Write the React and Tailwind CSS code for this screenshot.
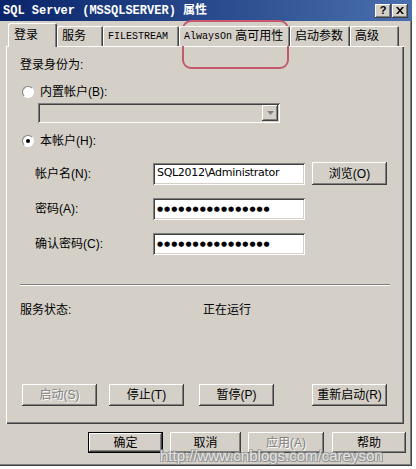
const raised =
  'shadow-[inset_-1px_-1px_#404040,inset_1px_1px_#ffffff,inset_-2px_-2px_#808080,inset_2px_2px_#d4d0c8]';
const sunken =
  'shadow-[inset_1px_1px_#808080,inset_-1px_-1px_#ffffff,inset_2px_2px_#404040,inset_-2px_-2px_#d4d0c8]';

const ui = "font-['Liberation_Sans','Noto_Sans_CJK_SC',sans-serif] text-[12px] text-black";

const Button = ({ children, className = '', disabled, isDefault }) => (
  <div
    className={`flex h-full items-center justify-center bg-[#d4d0c8] ${
      isDefault
        ? 'border border-black shadow-[inset_-1px_-1px_#404040,inset_1px_1px_#ffffff,inset_-2px_-2px_#808080]'
        : raised
    } ${disabled ? 'text-[#808080] [text-shadow:1px_1px_#ffffff]' : ''} ${className}`}
  >
    {children}
  </div>
);

const Radio = ({ checked, label }) => (
  <div className="flex h-[16px] items-center">
    <div className="ml-[16px] flex h-[12px] w-[12px] items-center justify-center rounded-full border border-t-[#808080] border-l-[#808080] border-b-white border-r-white bg-white">
      {checked && <div className="h-[4px] w-[4px] rounded-full bg-black" />}
    </div>
    <span className="ml-[6px]">{label}</span>
  </div>
);

const Field = ({ children }) => (
  <div className={`flex h-[22px] w-[152px] items-center bg-white px-[4px] ${sunken}`}>{children}</div>
);

const Dots = () => (
  <span className="font-['DejaVu_Sans',sans-serif] text-[7px] tracking-[1px]">
    {'●●●●●●●●●●●●●●●●'}
  </span>
);

const tabs = [
  { label: '服务', w: 'w-[46px]' },
  { label: 'FILESTREAM', w: 'w-[76px]', mono: true },
  { label: 'AlwaysOn', extra: ' 高可用性', w: 'w-[111px]', mono: true },
  { label: '启动参数', w: 'w-[60px]' },
  { label: '高级', w: 'w-[49px]' },
];

export default function App() {
  return (
    <div className={`relative h-[469px] w-[416px] overflow-hidden bg-white ${ui}`}>
      <div className="flex h-[466px] w-[412px] flex-col bg-[#d4d0c8] shadow-[inset_-1px_-1px_#404040,inset_-2px_-2px_#808080]">
        {/* title bar */}
        <div className="flex h-[21px] items-center justify-between bg-gradient-to-r from-[#0a246a] to-[#4a6fae] pl-[3px] pr-[4px]">
          <span className="font-['Liberation_Mono','Noto_Sans_CJK_SC',monospace] text-[12px] font-bold text-white">
            SQL Server (MSSQLSERVER) 属性
          </span>
          <div className="flex gap-[1px]">
            <div className={`flex h-[14px] w-[16px] items-center justify-center bg-[#d4d0c8] text-[11px] font-bold leading-none ${raised}`}>
              ?
            </div>
            <div className={`flex h-[14px] w-[16px] items-center justify-center bg-[#d4d0c8] ${raised}`}>
              <svg width="8" height="7" viewBox="0 0 8 7">
                <path d="M0 0h2l2 2.5L6 0h2L5 3.5 8 7H6L4 4.5 2 7H0l3-3.5z" fill="#000" />
              </svg>
            </div>
          </div>
        </div>

        {/* tabs */}
        <div className="relative z-10 mt-[2px] flex h-[24px] items-start pl-[8px]">
          <div className="flex h-[24px] w-[49px] items-start bg-[#d4d0c8] pl-[6px] pt-[3px] shadow-[inset_1px_1px_#ffffff,inset_-1px_0_#404040,inset_-2px_0_#808080] rounded-t-[2px]">
            登录
          </div>
          {tabs.map((t) => (
            <div
              key={t.label}
              className={`mt-[3px] flex h-[20px] ${t.w} items-center bg-[#d4d0c8] pl-[5px] shadow-[inset_1px_1px_#ffffff,inset_-1px_0_#404040,inset_-2px_0_#808080] rounded-t-[2px]`}
            >
              {t.mono ? (
                <span className="font-['Liberation_Mono',monospace] text-[10px]">{t.label}</span>
              ) : (
                t.label
              )}
              {t.extra && <span className="whitespace-pre">{t.extra}</span>}
            </div>
          ))}
        </div>

        {/* panel */}
        <div className="ml-[6px] mt-[-1px] flex h-[378px] w-[398px] flex-col bg-[#d4d0c8] shadow-[inset_1px_1px_#ffffff,inset_-1px_-1px_#404040,inset_-2px_-2px_#808080]">
          <div className="ml-[14px] mt-[11px] h-[16px] leading-[16px]">登录身份为:</div>
          <div className="mt-[11px]">
            <Radio label="内置帐户(B):" />
          </div>
          <div className={`ml-[32px] mt-[3px] flex h-[20px] w-[242px] items-center justify-end bg-[#d4d0c8] pr-[2px] ${sunken}`}>
            <div className={`flex h-[16px] w-[16px] items-center justify-center ${raised}`}>
              <svg width="7" height="4" viewBox="0 0 7 4">
                <path d="M0 0h7L3.5 4z" fill="#808080" />
              </svg>
            </div>
          </div>
          <div className="mt-[10px]">
            <Radio checked label="本帐户(H):" />
          </div>

          <div className="mt-[13px] flex h-[23px] items-center">
            <span className="ml-[29px] w-[118px]">帐户名(N):</span>
            <Field>
              <span className="font-['DejaVu_Sans',sans-serif] text-[11px] tracking-[-0.3px]">SQL2012\Administrator</span>
            </Field>
            <div className="ml-[7px] h-[23px] w-[75px]">
              <Button>浏览(O)</Button>
            </div>
          </div>
          <div className="mt-[13px] flex h-[22px] items-center">
            <span className="ml-[29px] w-[118px]">密码(A):</span>
            <Field>
              <Dots />
            </Field>
          </div>
          <div className="mt-[13px] flex h-[22px] items-center">
            <span className="ml-[29px] w-[118px]">确认密码(C):</span>
            <Field>
              <Dots />
            </Field>
          </div>

          <div className="ml-[14px] mt-[29px] h-[2px] w-[370px] border-t border-b border-t-[#808080] border-b-white" />

          <div className="mt-[16px] flex h-[16px] items-center">
            <span className="ml-[14px] w-[183px]">服务状态:</span>
            <span>正在运行</span>
          </div>

          <div className="mt-[66px] flex h-[22px]">
            <div className="ml-[16px] w-[75px]">
              <Button disabled>启动(S)</Button>
            </div>
            <div className="ml-[12px] w-[75px]">
              <Button>停止(T)</Button>
            </div>
            <div className="ml-[15px] w-[75px]">
              <Button>暂停(P)</Button>
            </div>
            <div className="ml-[38px] w-[75px]">
              <Button>重新启动(R)</Button>
            </div>
          </div>
        </div>

        {/* dialog buttons */}
        <div className="mt-[8px] flex h-[21px]">
          <div className="ml-[88px] w-[75px]">
            <Button isDefault>确定</Button>
          </div>
          <div className="ml-[7px] w-[71px]">
            <Button>取消</Button>
          </div>
          <div className="ml-[7px] w-[76px]">
            <Button disabled>应用(A)</Button>
          </div>
          <div className="ml-[8px] w-[74px]">
            <Button>帮助</Button>
          </div>
        </div>
      </div>

      {/* annotation */}
      <div className="absolute left-[182px] top-[20px] h-[49px] w-[107px] rounded-[9px] border-2 border-[#c4586e]" />

      {/* watermark */}
      <div className="absolute left-[160px] top-[447px] whitespace-nowrap font-['Liberation_Sans',sans-serif] text-[15px] leading-[18px] text-[#e8e8e8] opacity-90 [text-shadow:1px_1px_#8a8a8a,-1px_-1px_#9a9a9a,1px_-1px_#9a9a9a,-1px_1px_#9a9a9a]">
        http://www.cnblogs.com/careyson
      </div>
    </div>
  );
}
